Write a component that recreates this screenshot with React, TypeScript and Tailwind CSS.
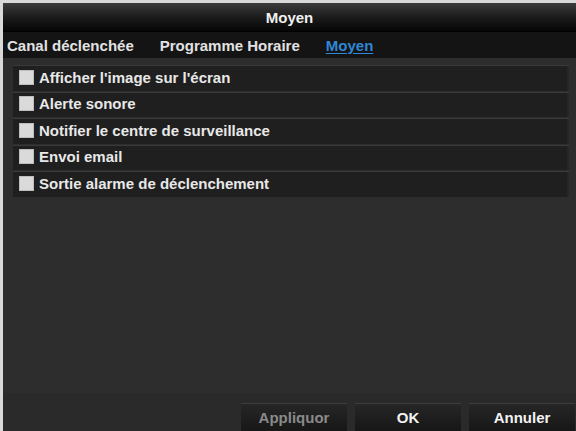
import React from "react";

const items = [
  "Afficher l'image sur l'écran",
  "Alerte sonore",
  "Notifier le centre de surveillance",
  "Envoi email",
  "Sortie alarme de déclenchement",
];

export default function App() {
  return (
    <div className="w-[576px] h-[431px] overflow-hidden bg-[#d9d9d9] pt-[3px] pl-[3px] font-['Liberation_Sans',Arial,sans-serif] text-[15px] font-bold">
      <div className="flex h-[428px] flex-col bg-[#2d2d2d]">
        <div className="flex h-[28px] shrink-0 items-center justify-center bg-gradient-to-b from-[#3c3c3c] via-[#1c1c1c] to-[#060606] leading-[17px] text-[#f0f0f0]">
          Moyen
        </div>
        <div className="flex h-[27px] shrink-0 gap-[26px] border-t border-[#000] bg-[#141414] pl-[4px] pt-[5px] leading-[17px] text-[#e2e2e2]">
          <span>Canal déclenchée</span>
          <span>Programme Horaire</span>
          <span className="text-[#2f87d6] underline decoration-[#2f87d6] underline-offset-2">Moyen</span>
        </div>
        <div className="flex flex-1 flex-col pl-[10px] pr-[7px] pt-[7px]">
          <div className="flex flex-col gap-[1px]">
            {items.map((t) => (
              <div
                key={t}
                className="flex h-[25.5px] items-center gap-[5px] border-t border-[#3a3a3a] bg-[#1f1f1f] pb-[2px] pl-[6px] leading-[17px] text-[#e8e8e8] shadow-[inset_-2px_0_0_#262626]"
              >
                <span className="h-[15px] w-[15px] shrink-0 border border-[#bdbdbd] bg-[#dadada]" />
                <span>{t}</span>
              </div>
            ))}
          </div>
          <div className="flex-1" />
        </div>
        <div className="flex h-[38px] shrink-0 justify-end gap-[8px] bg-[#2a2a2a] pr-[1px] pt-[10px]">
          <div className="flex h-[30px] w-[106px] items-center justify-center border-t border-[#3d3d3d] bg-gradient-to-b from-[#262626] to-[#161616] text-[#8a8a8a]">
            Appliquor
          </div>
          <div className="flex h-[30px] w-[106px] items-center justify-center border-t border-[#3d3d3d] bg-gradient-to-b from-[#262626] to-[#161616] text-[#f2f2f2]">
            OK
          </div>
          <div className="flex h-[30px] w-[106px] items-center justify-center border-t border-[#3d3d3d] bg-gradient-to-b from-[#262626] to-[#161616] text-[#f2f2f2]">
            Annuler
          </div>
        </div>
      </div>
    </div>
  );
}
